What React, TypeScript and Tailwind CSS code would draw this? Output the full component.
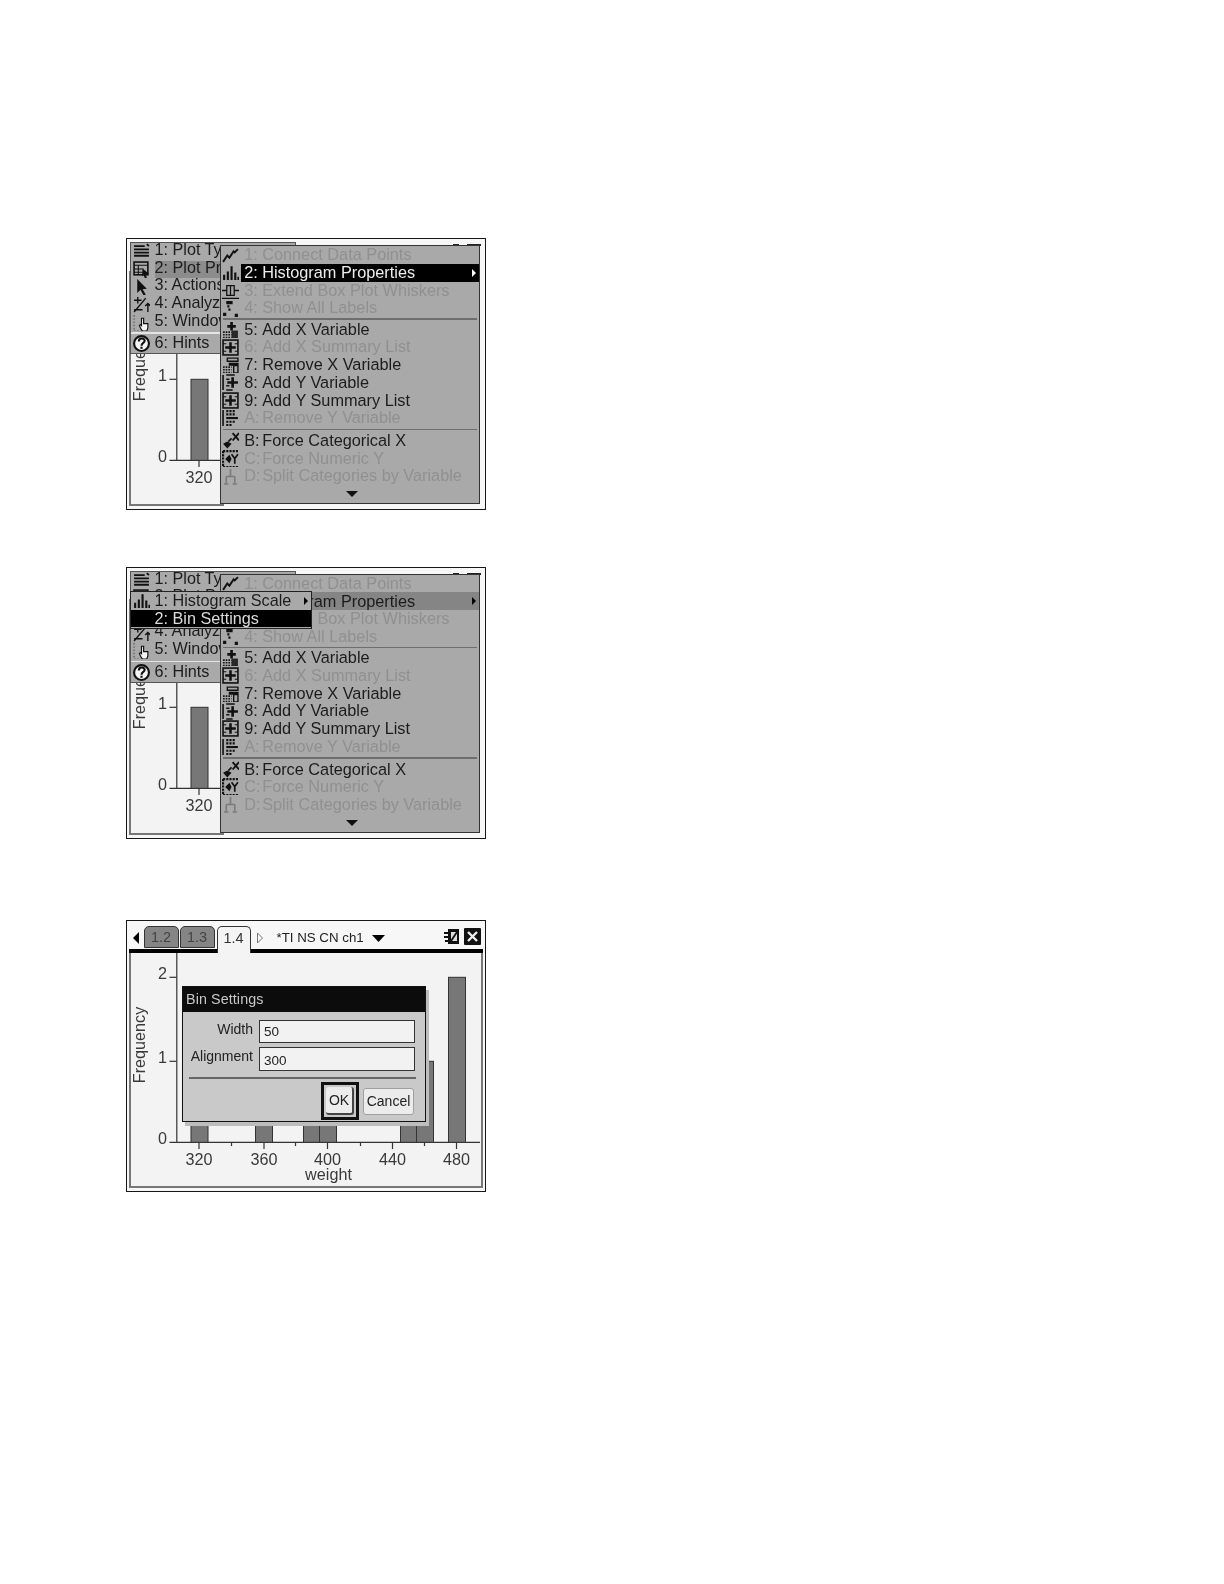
import React from "react";

const bars = [
    { x: 65.5, w: 17, v: 1 },
    { x: 130, w: 17, v: 1 },
    { x: 178, w: 16, v: 1 },
    { x: 194, w: 17, v: 1 },
    { x: 275, w: 16, v: 1 },
    { x: 291, w: 17, v: 1 },
    { x: 323, w: 17, v: 2 },
];
const xLabels = [
    { x: 73.5, t: "320" },
    { x: 138.5, t: "360" },
    { x: 202, t: "400" },
    { x: 267, t: "440" },
    { x: 331, t: "480" },
];
const minorTicks = [106, 170, 235, 299];

// behind the menus only the first bar and its labels can be seen
function Graph({ covered }: { covered: boolean }) {
    const shownBars = covered ? bars.slice(0, 1) : bars;
    const shownLabels = covered ? xLabels.slice(0, 1) : xLabels;
    return (
        <svg viewBox="5.5 33 349 233.5" className="block w-[349px] h-[233.5px] max-w-none fill-[#3a3a3a] text-[16.2px]">
            <line x1="51.3" y1="33" x2="51.3" y2="222.3" stroke="#333" strokeWidth="1.2" />
            <line x1="44" y1="222.3" x2="355" y2="222.3" stroke="#333" strokeWidth="1.2" />
            <line x1="44" y1="57.3" x2="51" y2="57.3" stroke="#333" strokeWidth="1.2" />
            <line x1="44" y1="141.3" x2="51" y2="141.3" stroke="#333" strokeWidth="1.2" />
            {shownBars.map((b) => (
                <rect key={b.x} x={b.x} y={b.v === 2 ? 57.3 : 141.3} width={b.w} height={b.v === 2 ? 165 : 81} className="fill-[#777]" stroke="#333" strokeWidth="1" />
            ))}
            {shownLabels.map((l) => (
                <g key={l.t}>
                    <line x1={l.x} y1="222.3" x2={l.x} y2="229" stroke="#333" strokeWidth="1.2" />
                    <text x={l.x} y="244.5" textAnchor="middle">{l.t}</text>
                </g>
            ))}
            {!covered && minorTicks.map((x) => (
                <line key={x} x1={x} y1="222.3" x2={x} y2="226" stroke="#333" strokeWidth="1.2" />
            ))}
            {!covered && <text x="37" y="58.8" textAnchor="middle">2</text>}
            <text x="37" y="142.8" textAnchor="middle">1</text>
            <text x="37" y="223.8" textAnchor="middle">0</text>
            {!covered && <text x="203" y="260" textAnchor="middle">weight</text>}
            <text transform="translate(19.5,125) rotate(-90)" textAnchor="middle">Frequency</text>
        </svg>
    );
}

function TopBar({ covered }: { covered: boolean }) {
    if (covered) return <div className="h-[29.5px]" />;
    return (
        <div className="flex h-[29.5px] items-start border-b-[4px] border-black pt-[3.2px] text-[14.5px]">
            <svg viewBox="0 0 6 12" className="ml-[3.5px] mt-[6px] w-[6px] h-[12px] fill-black"><path d="M6 0v12L0 6z" /></svg>
            <div className="ml-[5px] flex h-[22.3px] w-[35px] items-center justify-center rounded-t-[5px] border border-[#333] bg-[#858585] pt-[2px] text-[#444]">1.2</div>
            <div className="ml-[1px] flex h-[22.3px] w-[35px] items-center justify-center rounded-t-[5px] border border-[#333] bg-[#858585] pt-[2px] text-[#444]">1.3</div>
            <div className="relative z-10 ml-[2px] flex h-[26.5px] w-[34px] items-center justify-center rounded-t-[5px] border border-b-0 border-[#333] bg-[#f4f4f4] pb-[2px] text-[#333]">1.4</div>
            <svg viewBox="0 0 6 12" className="ml-[6px] mt-[6px] w-[6px] h-[12px] fill-none stroke-[#777]"><path d="M.5 1v10L5.5 6z" /></svg>
            <span className="ml-[14px] mt-[2px] text-[13.3px] text-[#222] whitespace-nowrap">*TI NS CN ch1</span>
            <svg viewBox="0 0 13 7" className="ml-[8px] mt-[9px] w-[13px] h-[7px] fill-black"><path d="M0 0h13L6.500 7z" /></svg>
            <svg viewBox="0 0 17 17" className="ml-auto mt-[2px] w-[17px] h-[17px]">
                <path d="M4 1h11v15H4zM0 4h4v2H0zM0 8h4v2H0zM1 12h3v2H1z" className="fill-[#111]" />
                <path d="M7 4h6v9H7z" className="fill-[#ddd]" />
                <path d="M7 13l6-9" stroke="#111" strokeWidth="1.800" />
            </svg>
            <svg viewBox="0 0 17 17" className="ml-[3px] mr-[2px] mt-[2px] w-[17px] h-[17px]">
                <rect width="17" height="17" rx="1" className="fill-[#111]" />
                <path d="M4 4l9 9M13 4l-9 9" stroke="#eee" strokeWidth="2.400" />
            </svg>
        </div>
    );
}

function Icon({ name }: { name: string }) {
    const k = "#111";
    const dotted = <path d="M1 10.500h8M1 13h8M1 15.500h8" stroke={k} strokeWidth="1.500" strokeDasharray="1.500 1" fill="none" />;
    const boxGrid = <rect x="1" y="1" width="14" height="14" fill="none" stroke={k} strokeWidth="1.500" />;
    switch (name) {
        case "line":
            return <path d="M1 14l4-6 2 2 4-6 1 1 3-3" fill="none" stroke={k} strokeWidth="1.800" />;
        case "hist":
            return <path d="M1 15h2v-5H1zM4.500 15h2V7h-2zM8 15h2V2H8zM11.500 15h2V8h-2zM14.500 15h1.500v-3h-1.500z" fill={k} />;
        case "box":
            return <path d="M0 8h4M12 8h4M4.500 3.500h7v9h-7zM8 3.500v9M0 15.500h16" fill="none" stroke={k} strokeWidth="1.200" />;
        case "labels":
            return <path d="M1 12h3v3H1zM12 13h3v3h-3zM6 8h2v2H6zM4 1h6v3H4zM5 5h2v2H5z" fill={k} />;
        case "addx":
            return <>{dotted}<rect x="9" y="9" width="6" height="7" fill={k} opacity=".85" /><path d="M9 1v8M5 5h8" stroke={k} strokeWidth="2.500" /></>;
        case "sumx":
            return <>{boxGrid}<path d="M8 3v10M3 8h10" stroke={k} strokeWidth="2.400" /><path d="M1 4.500h3M12 4.500h3M1 11.500h3M12 11.500h3" stroke={k} strokeWidth="1" /></>;
        case "remx":
            return <>{dotted}<path d="M5 2h10v3H5zM7 7h8v1.500H7zM11 9h4v7h-4z" fill="none" stroke={k} strokeWidth="1.300" /></>;
        case "addy":
            return <><path d="M1 1v14M4 1h8M4 15h6M4 5h3M4 11h3" stroke={k} strokeWidth="1.500" /><path d="M10 3v10M5 8h10" stroke={k} strokeWidth="2.500" /></>;
        case "remy":
            return <><path d="M1 1v15" stroke={k} strokeWidth="1.500" /><path d="M4 2h8M4 5h9M4 12h9M4 15h6" stroke={k} strokeWidth="2" strokeDasharray="2 1" /><path d="M4 8.500h11" stroke={k} strokeWidth="2" /></>;
        case "forcex":
            return <><path d="M1 11l4-2 4 2-4 4.500z" fill={k} /><path d="M6 9l3-3" stroke={k} strokeWidth="1.500" /><path d="M10 1l6 7M16 1l-6 7" stroke={k} strokeWidth="1.800" /></>;
        case "forcey":
            return <><path d="M1 1h14M1 16h14M1 1v15" stroke={k} strokeWidth="2" strokeDasharray="2 1" /><path d="M3 8.500l4-4 2 4-2 4z" fill={k} /><path d="M9 4l3 4 3-4M12 8v5" stroke={k} strokeWidth="1.600" fill="none" /></>;
        case "split":
            return <path d="M8 1v7M4 8h8M4 8v6M12 8v6M2 15h4M10 15h4" stroke="#7a7a7a" strokeWidth="1.500" fill="none" />;
        case "list":
            return <path d="M1 3h10M1 6h14M1 9h14M1 12h14M13 1l2 2" stroke={k} strokeWidth="1.700" fill="none" />;
        case "table":
            return <><rect x="1" y="1" width="13" height="12" fill="none" stroke={k} strokeWidth="1.500" /><path d="M1 4h13M1 7.500h9M1 10.500h9M5 4v9" stroke={k} strokeWidth="1" /><path d="M9 7l6 5-3 .5L13 16l-2 0-1-3-1.500 1.500z" fill={k} /></>;
        case "arrow":
            return <path d="M4 1l9 9-4 .5 3 5-2 1-3-5.500L4 14z" fill={k} />;
        case "analyze":
            return <><path d="M1 4h7M4.500 1v6M1 13h8M14 15V7M11.500 9.500L14 7l2.500 2.500M1 15L12 2" stroke={k} strokeWidth="1.300" fill="none" /></>;
        case "window":
            return <><path d="M1 1v15h5" stroke="#555" strokeWidth="1" strokeDasharray="1.500 1.500" fill="none" /><path d="M8 15l-2-4 1-1 1 1V4h2v5h4v4l-1 3H9z" fill="#f4f4f4" stroke={k} strokeWidth="1.100" /></>;
        case "help":
            return <><circle cx="8" cy="8" r="7" fill="#f4f4f4" stroke={k} strokeWidth="2" /><path d="M5.500 6c0-3.500 5.500-3.500 5.500-.5 0 2-3 2-3 4.500" fill="none" stroke={k} strokeWidth="2" /><path d="M7 11h2v2H7z" fill={k} /></>;
        default:
            return null;
    }
}

function MenuIcon({ name }: { name: string }) {
    return (
        <svg viewBox="0 0 16 16" className="w-[17px] h-[17px] shrink-0">
            <Icon name={name} />
        </svg>
    );
}

function SubArrow({ className }: { className: string }) {
    return <svg viewBox="0 0 4 8" className={`w-[4px] h-[8px] shrink-0 ${className}`}><path d="M0 0l4 4-4 4z" /></svg>;
}

type Item = { icon: string; num: string; label: string; dim?: boolean; sub?: boolean } | "sep";

const mainItems: Item[] = [
    { icon: "line", num: "1:", label: "Connect Data Points", dim: true },
    { icon: "hist", num: "2:", label: "Histogram Properties", sub: true },
    { icon: "box", num: "3:", label: "Extend Box Plot Whiskers", dim: true },
    { icon: "labels", num: "4:", label: "Show All Labels", dim: true },
    "sep",
    { icon: "addx", num: "5:", label: "Add X Variable" },
    { icon: "sumx", num: "6:", label: "Add X Summary List", dim: true },
    { icon: "remx", num: "7:", label: "Remove X Variable" },
    { icon: "addy", num: "8:", label: "Add Y Variable" },
    { icon: "sumx", num: "9:", label: "Add Y Summary List" },
    { icon: "remy", num: "A:", label: "Remove Y Variable", dim: true },
    "sep",
    { icon: "forcex", num: "B:", label: "Force Categorical X" },
    { icon: "forcey", num: "C:", label: "Force Numeric Y", dim: true },
    { icon: "split", num: "D:", label: "Split Categories by Variable", dim: true },
];

const leftItems = [
    { icon: "list", label: "1: Plot Type" },
    { icon: "table", label: "2: Plot Properties" },
    { icon: "arrow", label: "3: Actions" },
    { icon: "analyze", label: "4: Analyze" },
    { icon: "window", label: "5: Window/Zoom" },
];

function LeftMenu({ activeGray }: { activeGray: boolean }) {
    return (
        <div className="absolute left-[2.5px] top-[3px] w-[166px] h-[112px] border border-[#555] bg-[#a9a9a9] text-[16.2px] text-[#1c1c1c]">
            {leftItems.map((it, i) => (
                <div key={it.label} className="flex h-[17.6px] items-center pl-[2px] whitespace-nowrap">
                    <MenuIcon name={it.icon} />
                    <span className={`ml-[5px] flex h-full flex-1 items-center pb-[5px] ${i === 1 && activeGray ? "bg-[#8c8c8c]" : ""}`}>{it.label}</span>
                </div>
            ))}
            <div className="flex h-[4px] items-center"><div className="h-[1.5px] w-full bg-[#e4e4e4]" /></div>
            <div className="flex h-[17.6px] items-center pl-[2px]">
                <MenuIcon name="help" />
                <span className="ml-[5px] pb-[3px]">6: Hints</span>
            </div>
        </div>
    );
}

function MainMenu({ selected }: { selected: "black" | "gray" }) {
    return (
        <div className="absolute z-20 left-[93.2px] top-[6.3px] flex w-[260px] h-[259px] flex-col border border-[#333] bg-[#a9a9a9] text-[16.3px]">
            {mainItems.map((it, i) => {
                if (it === "sep") {
                    return <div key={i} className={`flex items-center px-[2px] ${i === 4 ? "h-[3.6px]" : "h-[5.2px]"}`}><div className="h-[1.5px] w-full bg-[#6e6e6e]" /></div>;
                }
                const rowBg = it.sub ? (selected === "black" ? "bg-black text-[#ececec]" : "bg-[#858585] text-[#1c1c1c]") : it.dim ? "text-[#909090]" : "text-[#1c1c1c]";
                return (
                    <div key={it.num} className="flex h-[17.7px] items-center pl-[1px] whitespace-nowrap">
                        <MenuIcon name={it.icon} />
                        <span className={`ml-[2px] flex h-full flex-1 items-center pl-[3px] pr-[3px] ${rowBg}`}>
                            <span className="w-[18px] pb-[1px]">{it.num}</span>
                            <span className="pb-[1px]">{it.label}</span>
                            {it.sub && <SubArrow className={`ml-auto ${selected === "black" ? "fill-white" : "fill-black"}`} />}
                        </span>
                    </div>
                );
            })}
            <div className="flex flex-1 items-center justify-center pl-[4px]">
                <svg viewBox="0 0 12 6" className="w-[12px] h-[6px] fill-[#111]"><path d="M0 0h12L6 6z" /></svg>
            </div>
        </div>
    );
}

function SubMenu() {
    return (
        <div className="absolute z-30 left-[2.5px] top-[23.5px] w-[182px] h-[37.5px] border border-[#222] bg-[#a9a9a9] text-[16.2px] text-[#1c1c1c]">
            <div className="flex h-[17.6px] items-center pl-[2px] whitespace-nowrap">
                <MenuIcon name="hist" />
                <span className="ml-[5px] pb-[1px]">1: Histogram Scale</span>
                <SubArrow className="ml-auto mr-[3px] fill-black" />
            </div>
            <div className="flex h-[17.6px] items-center bg-black pl-[24px] text-[#dcdcdc] whitespace-nowrap">
                <span className="pb-[1px]">2: Bin Settings</span>
            </div>
        </div>
    );
}

function BinDialog() {
    return (
        <div className="absolute z-20 left-[55px] top-[65px] flex w-[244px] h-[136px] flex-col border-[1.5px] border-[#111] bg-[#c9c9c9] shadow-[3px_4px_0_#bdbdbd] text-[14px] text-[#222]">
            <div className="flex h-[25px] items-center bg-[#0c0c0c] pl-[3px] text-[14.3px] tracking-[0.1px] text-[#c8c8c8]">Bin Settings</div>
            <div className="flex flex-col px-[6px] pt-[7px]">
                <div className="flex items-center">
                    <span className="w-[64px] pb-[3px] text-right">Width</span>
                    <div className="ml-[6px] flex h-[23px] w-[156px] items-center border border-[#333] bg-[#f2f2f2] pl-[4px] pt-[3px] text-[13.5px]">50</div>
                </div>
                <div className="mt-[3px] flex items-center">
                    <span className="w-[64px] pb-[5px] text-right whitespace-nowrap">Alignment</span>
                    <div className="ml-[6px] flex h-[24px] w-[156px] items-center border border-[#333] bg-[#f2f2f2] pl-[4px] pt-[4px] text-[13.5px]">300</div>
                </div>
                <div className="mt-[5px] h-[2px] w-[227px] bg-[#666]" />
            </div>
            <div className="mt-[3px] flex items-center justify-end pr-[11px]">
                <div className="border-[3px] border-[#111] bg-[#c9c9c9] p-[2px]">
                    <button className="flex h-[28px] w-[28px] items-center justify-center rounded-[3px] border-b-2 border-r-2 border-[#444] bg-[#ececec]">OK</button>
                </div>
                <button className="ml-[4px] flex h-[27px] w-[51px] items-center justify-center rounded-[3px] border border-[#a0a0a0] bg-[#ececec]">Cancel</button>
            </div>
        </div>
    );
}

function Screen({ className, covered = false, children }: { className?: string; covered?: boolean; children?: React.ReactNode }) {
    return (
        <div className={`relative w-[360px] h-[272px] overflow-hidden border-[1.5px] border-[#161616] bg-[#f7f7f7] p-[2px] blur-[0.35px] ${className ?? ""}`}>
            <TopBar covered={covered} />
            <div className={`border-l-2 border-b-2 border-[#777] bg-[#f3f3f3] ${covered ? "w-[95px] overflow-hidden" : "border-r-2"}`}>
                <Graph covered={covered} />
            </div>
            {children}
        </div>
    );
}

function Peek() {
    return (
        <>
            <div className="absolute left-[326px] top-[5px] h-[2px] w-[6px] bg-[#222]" />
            <div className="absolute left-[340px] top-[5px] h-[2px] w-[14px] bg-[#222]" />
        </>
    );
}

export default function App() {
    return (
        <div className="min-h-[1584px] bg-white pl-[126px] pt-[238px] font-['Liberation_Sans',Arial,sans-serif]">
            <Screen covered>
                <Peek />
                <LeftMenu activeGray />
                <MainMenu selected="black" />
            </Screen>
            <Screen covered className="mt-[56.500px]">
                <Peek />
                <LeftMenu activeGray={false} />
                <MainMenu selected="gray" />
                <SubMenu />
            </Screen>
            <Screen className="mt-[81.500px]">
                <BinDialog />
            </Screen>
        </div>
    );
}
